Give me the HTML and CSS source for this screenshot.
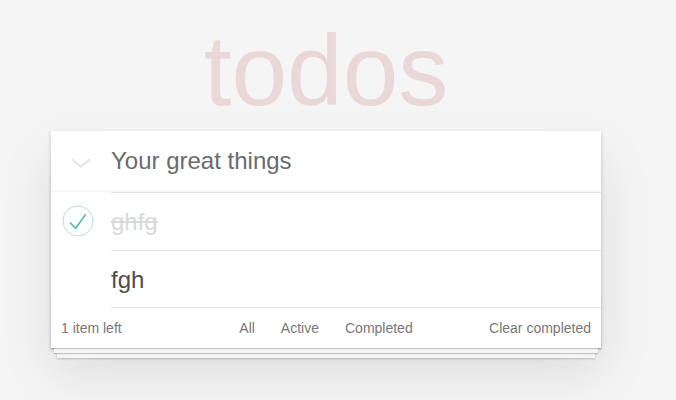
FILE: index.html
```html
<!DOCTYPE html>
<html lang="en">
<head>
<meta charset="utf-8">
<title>todos</title>
<link rel="stylesheet" href="styles.css">
</head>
<body>
<div class="page">
  <h1 class="title">todos</h1>
  <section class="todoapp">
    <header class="header">
      <span class="toggle-all">
        <svg width="20" height="10" viewBox="0 0 20 10"><polyline points="1,1.5 10,8.5 19,1.5" fill="none" stroke="#e3e3e3" stroke-width="2"/></svg>
      </span>
      <input class="new-todo" placeholder="Your great things">
    </header>
    <ul class="todo-list">
      <li class="todo completed">
        <span class="toggle">
          <svg width="32" height="32" viewBox="0 0 32 32"><circle cx="16" cy="16" r="15" fill="none" stroke="#bddad5" stroke-width="1"/><polyline points="8,17.7 13.7,23.3 23.7,9.3" fill="none" stroke="#5dc2af" stroke-width="1.8"/></svg>
        </span>
        <label class="label">ghfg</label>
      </li>
      <li class="todo">
        <span class="toggle"></span>
        <label class="label">fgh</label>
      </li>
    </ul>
    <footer class="footer">
      <span class="todo-count">1 item left</span>
      <ul class="filters">
        <li><a href="#/">All</a></li>
        <li><a href="#/active">Active</a></li>
        <li><a href="#/completed">Completed</a></li>
      </ul>
      <button class="clear-completed">Clear completed</button>
    </footer>
  </section>
</div>
</body>
</html>
```

FILE: styles.css
```css
html, body {
  margin: 0;
  padding: 0;
  min-height: 100%;
  background: #f5f5f5;
}
html {
  height: 100%;
}
body {
  color: #4d4d4d;
  font-family: "Liberation Sans", Arial, Helvetica, sans-serif;
  font-size: 14px;
  line-height: 1.4em;
}
.page {
  width: 652px;
  padding: 20px 0 40px;
}
.title {
  margin: 0 0 11px;
  height: 100px;
  font-size: 100px;
  line-height: 100px;
  font-weight: 100;
  text-align: center;
  color: rgba(175, 47, 47, 0.15);
}
.todoapp {
  width: 550px;
  margin: 0 auto;
  background: #fff;
  box-shadow: 0 2px 4px rgba(0, 0, 0, 0.2), 0 25px 50px 0 rgba(0, 0, 0, 0.1);
}
.header {
  display: flex;
  align-items: center;
  height: 61px;
  box-shadow: inset 0 -2px 1px rgba(0, 0, 0, 0.03);
}
.toggle-all {
  width: 60px;
  display: flex;
  justify-content: center;
  padding-top: 2px;
}
.toggle-all svg {
  display: block;
}
.new-todo {
  flex: 1;
  height: 61px;
  box-sizing: border-box;
  border: none;
  outline: none;
  background: transparent;
  padding: 0 16px 2px 0;
  margin: 0;
  font-family: inherit;
  font-size: 24px;
  color: #6b6b6b;
}
.new-todo::placeholder {
  color: #6b6b6b;
  opacity: 1;
}
.todo-list {
  list-style: none;
  margin: 0;
  padding: 0;
}
.todo {
  display: flex;
  align-items: center;
}
.toggle {
  width: 60px;
  box-sizing: border-box;
  padding-left: 11px;
  display: flex;
  align-items: center;
}
.toggle svg {
  display: block;
}
.label {
  flex: 1;
  border-top: 1px solid #e6e6e6;
  padding: 15px 15px 15px 0;
  font-size: 24px;
  line-height: 27px;
  color: #4d4d4d;
}
.todo:last-child .label {
  border-bottom: 1px solid #e6e6e6;
  padding-bottom: 14px;
}
.completed .label {
  color: #d9d9d9;
  text-decoration: line-through;
}
.footer {
  position: relative;
  display: grid;
  grid-template-columns: 1fr auto 1fr;
  grid-template-rows: 20px;
  align-items: center;
  height: 20px;
  padding: 10px 10px;
  color: #777;
  font-size: 14px;
  line-height: 20px;
}
.footer::before {
  content: "";
  position: absolute;
  right: 0;
  bottom: 0;
  left: 0;
  height: 50px;
  overflow: hidden;
  box-shadow: 0 1px 1px rgba(0, 0, 0, 0.2),
    0 8px 0 -3px #f6f6f6,
    0 9px 1px -3px rgba(0, 0, 0, 0.2),
    0 16px 0 -6px #f6f6f6,
    0 17px 2px -6px rgba(0, 0, 0, 0.2);
  pointer-events: none;
}
.todo-count {
  justify-self: start;
  position: relative;
}
.filters {
  list-style: none;
  margin: 0;
  padding: 0;
  display: flex;
  align-items: center;
  gap: 4px;
  position: relative;
  height: 20px;
}
.filters a {
  display: block;
  margin: 0 3px;
  padding: 3px 7px;
  border: 1px solid transparent;
  color: inherit;
  text-decoration: none;
  line-height: 20px;
}
.clear-completed {
  justify-self: end;
  position: relative;
  border: none;
  background: none;
  padding: 0;
  margin: 0;
  font: inherit;
  line-height: 20px;
  color: #777;
}
```
